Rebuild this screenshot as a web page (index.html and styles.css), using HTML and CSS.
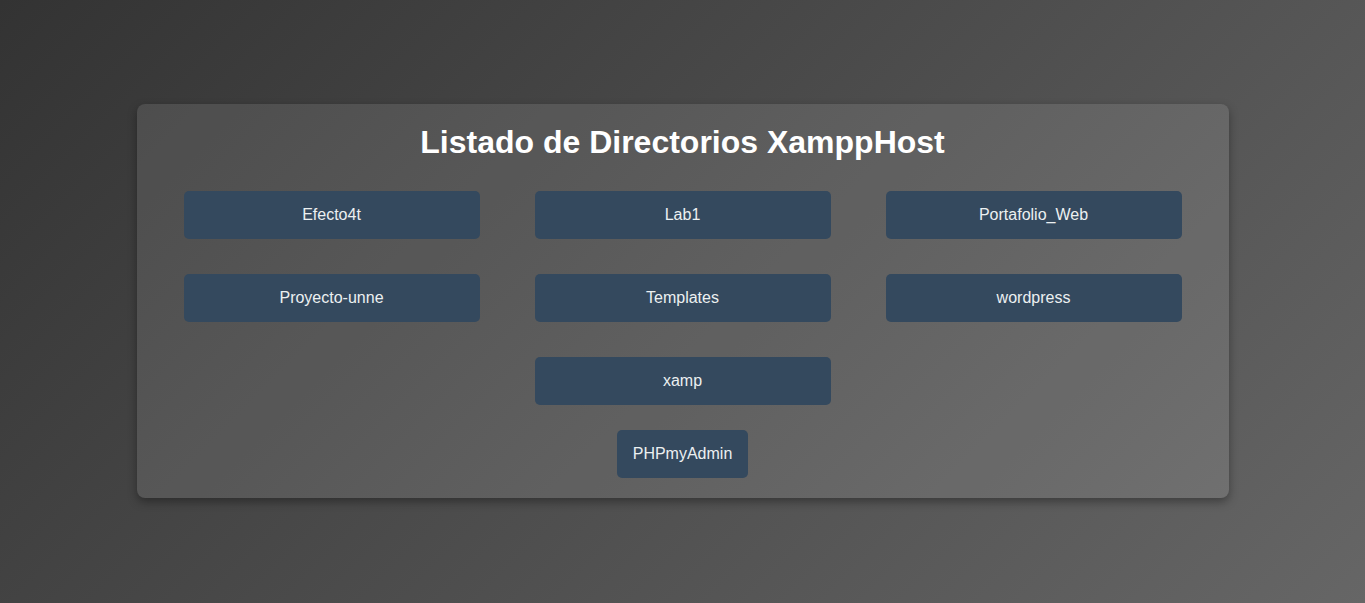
FILE: index.html
```html
<!DOCTYPE html>
<html lang="es">
<head>
<meta charset="utf-8">
<title>Listado de Directorios XamppHost</title>
<link rel="stylesheet" href="styles.css">
</head>
<body>
<div class="card">
  <h1 class="title">Listado de Directorios XamppHost</h1>
  <div class="dirs">
    <a class="btn dir" href="#">Efecto4t</a>
    <a class="btn dir" href="#">Lab1</a>
    <a class="btn dir" href="#">Portafolio_Web</a>
    <a class="btn dir" href="#">Proyecto-unne</a>
    <a class="btn dir" href="#">Templates</a>
    <a class="btn dir" href="#">wordpress</a>
    <a class="btn dir" href="#">xamp</a>
  </div>
  <div class="admin-row">
    <a class="btn admin" href="#">PHPmyAdmin</a>
  </div>
</div>
</body>
</html>
```
FILE: styles.css
```css
html, body {
  margin: 0;
  padding: 0;
}
body {
  box-sizing: border-box;
  min-height: 100vh;
  padding-bottom: 2px;
  display: flex;
  align-items: center;
  justify-content: center;
  background: linear-gradient(135deg, #333333, #666666);
  font-family: "Liberation Sans", Arial, sans-serif;
}
.card {
  width: 80%;
  box-sizing: border-box;
  padding: 20px;
  background: rgba(255, 255, 255, 0.1);
  border-radius: 8px;
  box-shadow: 0 4px 10px rgba(0, 0, 0, 0.35);
}
.title {
  margin: 0 0 30px;
  text-align: center;
  color: #ffffff;
  font-size: 32px;
  font-weight: bold;
  line-height: 37px;
}
.dirs {
  display: flex;
  flex-wrap: wrap;
  justify-content: center;
  column-gap: 55px;
  row-gap: 35px;
}
.btn {
  display: block;
  box-sizing: border-box;
  padding: 15px;
  background: #34495e;
  color: #ecf0f1;
  text-decoration: none;
  text-align: center;
  font-size: 16px;
  line-height: 18px;
  border-radius: 5px;
}
.dir {
  width: 296px;
}
.admin {
  padding: 15px 16px;
}
.admin-row {
  display: flex;
  justify-content: center;
  margin-top: 25px;
}
```
